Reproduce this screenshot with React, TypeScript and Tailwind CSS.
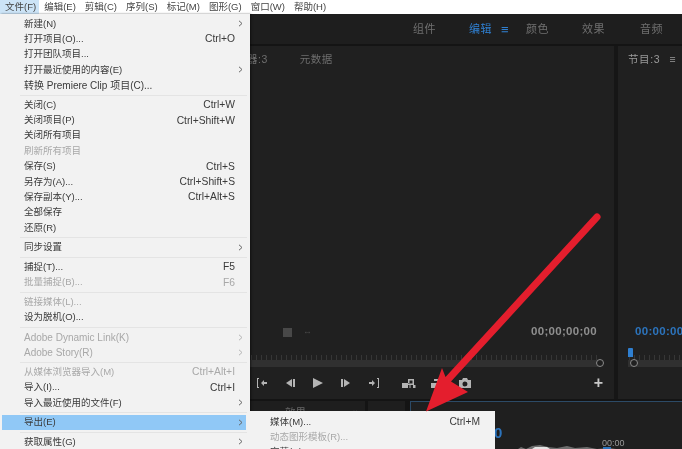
import React from 'react';

const font = { cn: "font-['Liberation_Sans','Noto_Sans_CJK_SC',sans-serif]" };

type Item = { label: string; key?: string; sub?: boolean; off?: boolean; active?: boolean; latin?: boolean } | 'sep';

const fileMenu: Item[] = [
  { label: '新建(N)', sub: true },
  { label: '打开项目(O)...', key: 'Ctrl+O' },
  { label: '打开团队项目...' },
  { label: '打开最近使用的内容(E)', sub: true },
  { label: '转换 Premiere Clip 项目(C)...', latin: true },
  'sep',
  { label: '关闭(C)', key: 'Ctrl+W' },
  { label: '关闭项目(P)', key: 'Ctrl+Shift+W' },
  { label: '关闭所有项目' },
  { label: '刷新所有项目', off: true },
  { label: '保存(S)', key: 'Ctrl+S' },
  { label: '另存为(A)...', key: 'Ctrl+Shift+S' },
  { label: '保存副本(Y)...', key: 'Ctrl+Alt+S' },
  { label: '全部保存' },
  { label: '还原(R)' },
  'sep',
  { label: '同步设置', sub: true },
  'sep',
  { label: '捕捉(T)...', key: 'F5' },
  { label: '批量捕捉(B)...', key: 'F6', off: true },
  'sep',
  { label: '链接媒体(L)...', off: true },
  { label: '设为脱机(O)...' },
  'sep',
  { label: 'Adobe Dynamic Link(K)', sub: true, off: true, latin: true },
  { label: 'Adobe Story(R)', sub: true, off: true, latin: true },
  'sep',
  { label: '从媒体浏览器导入(M)', key: 'Ctrl+Alt+I', off: true },
  { label: '导入(I)...', key: 'Ctrl+I' },
  { label: '导入最近使用的文件(F)', sub: true },
  'sep',
  { label: '导出(E)', sub: true, active: true },
  'sep',
  { label: '获取属性(G)', sub: true },
];

const exportMenu = [
  { label: '媒体(M)...', key: 'Ctrl+M' },
  { label: '动态图形模板(R)...', off: true },
  { label: '字幕(C)...' },
];

const menuBar = ['文件(F)', '编辑(E)', '剪辑(C)', '序列(S)', '标记(M)', '图形(G)', '窗口(W)', '帮助(H)'];

function Chevron({ off }: { off?: boolean }) {
  return (
    <svg width="5" height="7" viewBox="0 0 5 7" className={off ? 'text-[#b5b5b5]' : 'text-[#666]'}>
      <path d="M1 .8 4 3.5 1 6.2" fill="none" stroke="currentColor" strokeWidth="1" />
    </svg>
  );
}

function Menu() {
  return (
    <div className="absolute left-0 top-[14px] w-[250px] h-[435px] bg-[#f2f2f2] pt-[2px] shadow-[1px_0_2px_rgba(0,0,0,0.5)] text-[10.3px]">
      {fileMenu.map((item, i) =>
        item === 'sep' ? (
          <div key={i} className="h-[4.2px] flex items-center pl-[20px] pr-[3px]">
            <div className="h-px w-full bg-[#e4e4e4]" />
          </div>
        ) : (
          <div
            key={i}
            className={`h-[15.4px] w-[244px] ml-[2px] flex items-center pl-[22px] pr-[3px] ${
              item.active ? 'bg-[#90c8f6]' : ''
            } ${item.off ? 'text-[#a8a8a8]' : 'text-[#3a3a3a]'}`}
          >
            <span className={`flex-1 whitespace-nowrap ${item.latin ? 'text-[10px]' : 'text-[9.5px]'}`}>{item.label}</span>
            {item.key && <span className="mr-[8px] whitespace-nowrap">{item.key}</span>}
            {item.sub && <Chevron off={item.off} />}
          </div>
        ),
      )}
    </div>
  );
}

function ExportMenu() {
  return (
    <div className="absolute left-[248px] top-[411px] w-[247px] bg-[#f2f2f2] pt-[3px] text-[10.3px]">
      {exportMenu.map((item) => (
        <div
          key={item.label}
          className={`h-[15.4px] flex items-center pl-[22px] pr-[15px] ${item.off ? 'text-[#a8a8a8]' : 'text-[#3a3a3a]'}`}
        >
          <span className="flex-1 text-[9.5px]">{item.label}</span>
          {item.key && <span>{item.key}</span>}
        </div>
      ))}
    </div>
  );
}

function Tab({ label, w, blue }: { label: string; w: string; blue?: boolean }) {
  return (
    <div className={`${w} flex items-center gap-[9px] text-[11px] tracking-[0.5px] ${blue ? 'text-[#2f7fd0]' : 'text-[#6f6f6f]'}`}>
      {label}
      {blue && <span className="text-[13px] leading-none">≡</span>}
    </div>
  );
}

function Ruler() {
  return (
    <svg width="100%" height="6" className="block">
      <pattern id="ticks" width="5" height="6" patternUnits="userSpaceOnUse">
        <rect x="1" y="1" width="1" height="5" fill="#363636" />
      </pattern>
      <rect width="100%" height="6" fill="url(#ticks)" />
    </svg>
  );
}

function Ctl({ d, w = 'w-[28px]' }: { d: string; w?: string }) {
  return (
    <div className={`${w} flex justify-center`}>
      <svg width="14" height="12" viewBox="0 0 14 12">
        <path d={d} fill="#b4b4b4" />
      </svg>
    </div>
  );
}

const icons = {
  markIn: 'M2 1h2v1H3v8h1v1H2zM6 6l3-3v2h3v2H9v2z',
  stepBack: 'M3 6l6-4v8zM10 2h2v8h-2z',
  play: 'M2 1l10 5-10 5z',
  stepFwd: 'M2 2h2v8H2zM5 2l6 4-6 4z',
  markOut: 'M2 5h3V3l3 3-3 3V7H2zM10 1h2v10h-2v-1h1V2h-1z',
  lift: 'M0 6h6v5H0zM6 2h6v6H6V6.5h4.5v-3H7.5V6H6zM7.5 8h1v3h-1zM11 8h2.5v3H11z',
  extract: 'M1 6h6v5H1zM4 2h5v4H7V4H4zM9 7h4v4H9z',
  camera: 'M1 3h3l1-2h4l1 2h3v8H1zm6 1.5a2.5 2.5 0 100 5 2.5 2.5 0 000-5z',
};

export default function App() {
  return (
    <div className={`relative w-[682px] h-[449px] overflow-hidden bg-[#202020] blur-[0.4px] ${font.cn}`}>
      {/* menu bar */}
      <div className="h-[14px] bg-white flex items-center text-[9.5px] text-[#444]">
        {menuBar.map((m, i) => (
          <div key={m} className={`h-full flex items-center pl-[5px] ${i === 0 ? 'bg-[#cce4f7] pr-[3px]' : 'pr-[4px]'}`}>
            {m}
          </div>
        ))}
      </div>

      {/* workspace tabs */}
      <div className="h-[32px] bg-[#1e1e1e] border-b-2 border-[#141414] flex items-center pl-[413px]">
        <Tab label="组件" w="w-[56px]" />
        <Tab label="编辑" w="w-[57px]" blue />
        <Tab label="颜色" w="w-[56px]" />
        <Tab label="效果" w="w-[58px]" />
        <Tab label="音频" w="w-[42px]" />
      </div>

      {/* monitors */}
      <div className="h-[353px] flex">
        <div className="w-[614px] shrink-0 pl-[247px] flex flex-col">
          <div className="h-[28px] flex items-center gap-[32px] text-[10.5px] text-[#6e6e6e] tracking-[0.5px]">
            <span>器:3</span>
            <span>元数据</span>
          </div>
          <div className="h-[249px]" />
          <div className="h-[18px] flex items-center pl-[36px] pr-[17px]">
            <div className="w-[9px] h-[9px] bg-[#484848]" />
            <span className="ml-[11px] text-[9px] text-[#4a4a4a]">↔</span>
            <span className="ml-auto text-[11.5px] font-bold text-[#8f8f8f] tracking-[0.3px]">00;00;00;00</span>
          </div>
          <div className="ml-[3px] mr-[13px] mt-[11px] h-[8px] flex items-end">
            <Ruler />
          </div>
          <div className="h-[7px] ml-[3px] mr-[13px] bg-[#303030] relative">
            <div className="absolute -right-[3px] -top-[1px] w-[8px] h-[8px] rounded-full border-[1.5px] border-[#8a8a8a] bg-[#202020]" />
          </div>
          <div className="h-[32px] flex items-center pl-[1px] pr-[11px]">
            <Ctl d={icons.markIn} />
            <Ctl d={icons.stepBack} />
            <Ctl d={icons.play} />
            <Ctl d={icons.stepFwd} />
            <Ctl d={icons.markOut} />
            <div className="w-[7px]" />
            <Ctl d={icons.lift} />
            <Ctl d={icons.extract} />
            <Ctl d={icons.camera} />
            <span className="ml-auto text-[16px] leading-none font-bold text-[#c8c8c8]">+</span>
          </div>
        </div>
        <div className="w-[4px] shrink-0 bg-[#161616]" />
        <div className="flex-1 min-w-0 overflow-hidden pl-[10px] flex flex-col">
          <div className="h-[28px] flex items-center gap-[9px] text-[10.5px] text-[#9a9a9a]">
            <span className="tracking-[0.6px]">节目:3</span>
            <span>≡</span>
          </div>
          <div className="h-[249px]" />
          <div className="h-[18px] pl-[7px] flex items-center text-[11.5px] font-bold text-[#2c74bd] whitespace-nowrap tracking-[0.3px]">00:00:00</div>
          <div className="h-[8px] mt-[11px] relative flex items-end">
            <div className="absolute left-[0px] top-[-4px] w-[5px] h-[9px] bg-[#2f7fd0] rounded-t-[1px]" />
            <Ruler />
          </div>
          <div className="h-[7px] bg-[#303030] relative">
            <div className="absolute left-[2px] -top-[1px] w-[8px] h-[8px] rounded-full border-[1.5px] border-[#8a8a8a] bg-[#202020]" />
          </div>
        </div>
      </div>

      {/* lower panels */}
      <div className="h-[50px] bg-[#141414] flex pt-[2px]">
        <div className="w-[365px] bg-[#1e1e1e] pl-[285px] pt-[4px] text-[10.5px] text-[#666]">
          效果 <span className="ml-[44px]">»</span>
        </div>
        <div className="w-[3px]" />
        <div className="w-[37px] bg-[#1e1e1e]" />
        <div className="w-[5px]" />
        <div className="flex-1 bg-[#1f1f1f] border-t border-l border-[#2c4a66] relative">
          <span className="absolute left-[83px] top-[23px] text-[15px] leading-none font-bold text-[#2c74bd]">0</span>
          <span className="absolute left-[191px] top-[37px] text-[9px] leading-none text-[#999]">00:00</span>
          <svg className="absolute left-[104px] top-[41px]" width="168" height="8" viewBox="0 0 168 8">
            <path d="M0 8 6 4l5 2 6-3 8-1 8 2 9 1 10-2 8 2 12-1 10 2 12-1 14 2 10-1 14 1 12-1 12 1 12-1v6z" fill="#6e6e6e" />
            <path d="M14 8l6-4 12 0 6 4z" fill="#e4e4e4" />
            <rect x="88" y="4" width="8" height="4" fill="#2c74bd" />
          </svg>
        </div>
      </div>

      <Menu />
      <ExportMenu />

      {/* red annotation arrow */}
      <svg className="absolute inset-0 pointer-events-none" width="682" height="449" viewBox="0 0 682 449">
        <path
          d="M594.5 214.5a3.5 3.5 0 0 1 5 5L451 381.5l17 10.5-42 19.5 16-43.5 3.5 9z"
          fill="#e41e2d"
        />
      </svg>
    </div>
  );
}
